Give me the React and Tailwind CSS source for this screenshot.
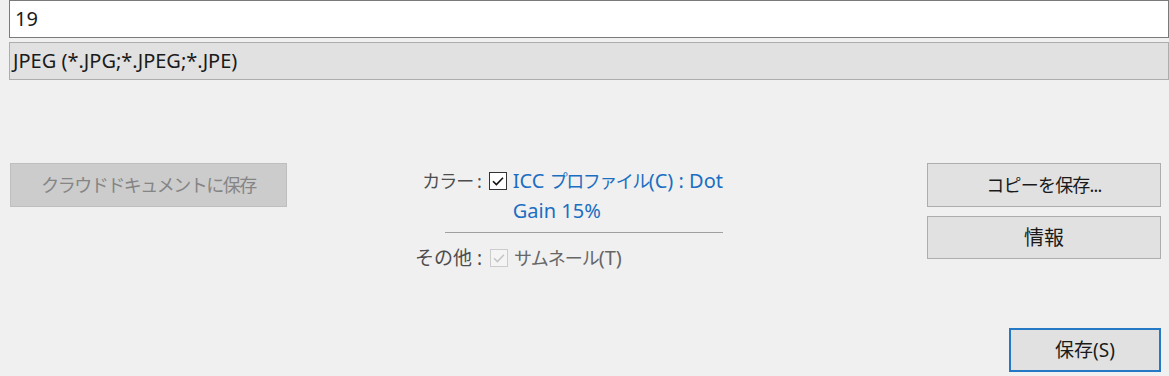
export default function App() {
    const font = { fontFamily: '"Noto Sans", "Noto Sans CJK JP", sans-serif' };

    return (
        <div className="w-[1169px] h-[376px] bg-[#f0f0f0] flex flex-col text-[20px] text-[#1a1a1a] overflow-hidden" style={font}>
            {/* File name */}
            <div className="shrink-0 ml-[9px] h-[38px] bg-white border border-[#7a7a7a] flex items-center pl-[5px] leading-none">
                19
            </div>

            {/* Format */}
            <div className="shrink-0 ml-[9px] mt-[4px] h-[38px] bg-[#e1e1e1] border border-[#adadad] flex items-center pl-[3px] leading-none">
                JPEG (*.JPG;*.JPEG;*.JPE)
            </div>

            <div className="shrink-0 flex items-start mt-[83px]">
                {/* Cloud save */}
                <button
                    type="button"
                    disabled
                    className="ml-[10px] w-[277px] h-[44px] bg-[#cccccc] border border-[#bfbfbf] text-[#858585] text-[18px] tracking-[-1.5px]"
                >
                    クラウドドキュメントに保存
                </button>

                {/* Options */}
                <div className="ml-[123px] w-[313px] mt-[5px]">
                    <div className="flex items-start">
                        <div className="w-[72px] text-right text-[#4d4d4d] text-[18px] tracking-[-1px] leading-[26px] whitespace-nowrap">カラー :</div>
                        <div className="ml-[8px] mt-[4px] w-[18px] h-[18px] border border-[#333] bg-white flex items-center justify-center shrink-0">
                            <svg width="14" height="14" viewBox="0 0 14 14">
                                <path d="M2 7.2 L5.4 10.6 L12 3.8" fill="none" stroke="#111" strokeWidth="1.6" />
                            </svg>
                        </div>
                        <div className="ml-[6px] text-[#1b6ec2] leading-[30px] -mt-[2px]">
                            <div className="whitespace-nowrap">
                                ICC <span className="text-[18px] tracking-[-1.5px]">プロファイル</span>(C) : Dot
                            </div>
                            <div>Gain 15%</div>
                        </div>
                    </div>

                    <div className="ml-[35px] mt-[6px] h-px bg-[#a0a0a0]" />

                    <div className="flex items-start mt-[12px]">
                        <div className="w-[72px] text-right text-[#4d4d4d] text-[19px] leading-[26px] whitespace-nowrap">その他 :</div>
                        <div className="ml-[8px] mt-[4px] w-[18px] h-[18px] border border-[#cccccc] bg-[#f4f4f4] flex items-center justify-center shrink-0">
                            <svg width="14" height="14" viewBox="0 0 14 14">
                                <path d="M2 7.2 L5.4 10.6 L12 3.8" fill="none" stroke="#c4c4c4" strokeWidth="1.5" />
                            </svg>
                        </div>
                        <div className="ml-[6px] text-[#666666] leading-[26px] whitespace-nowrap">
                            <span className="text-[18px] tracking-[-1px]">サムネール</span>(T)
                        </div>
                    </div>
                </div>

                {/* Actions */}
                <div className="ml-auto mr-[8px] w-[234px] flex flex-col gap-[9px]">
                    <button type="button" className="h-[44px] bg-[#e1e1e1] border border-[#adadad] text-[#1a1a1a] text-[18px] tracking-[-0.8px]">
                        コピーを保存...
                    </button>
                    <button type="button" className="h-[43px] bg-[#e1e1e1] border border-[#adadad] text-[#1a1a1a] text-[20px]">
                        情報
                    </button>
                </div>
            </div>

            <div className="shrink-0 flex justify-end mt-auto mb-[4px] mr-[8px]">
                <button type="button" className="w-[152px] h-[44px] bg-[#e1e1e1] border-2 border-[#2478c6] text-[#1a1a1a] text-[19px]">
                    保存(S)
                </button>
            </div>
        </div>
    );
}
